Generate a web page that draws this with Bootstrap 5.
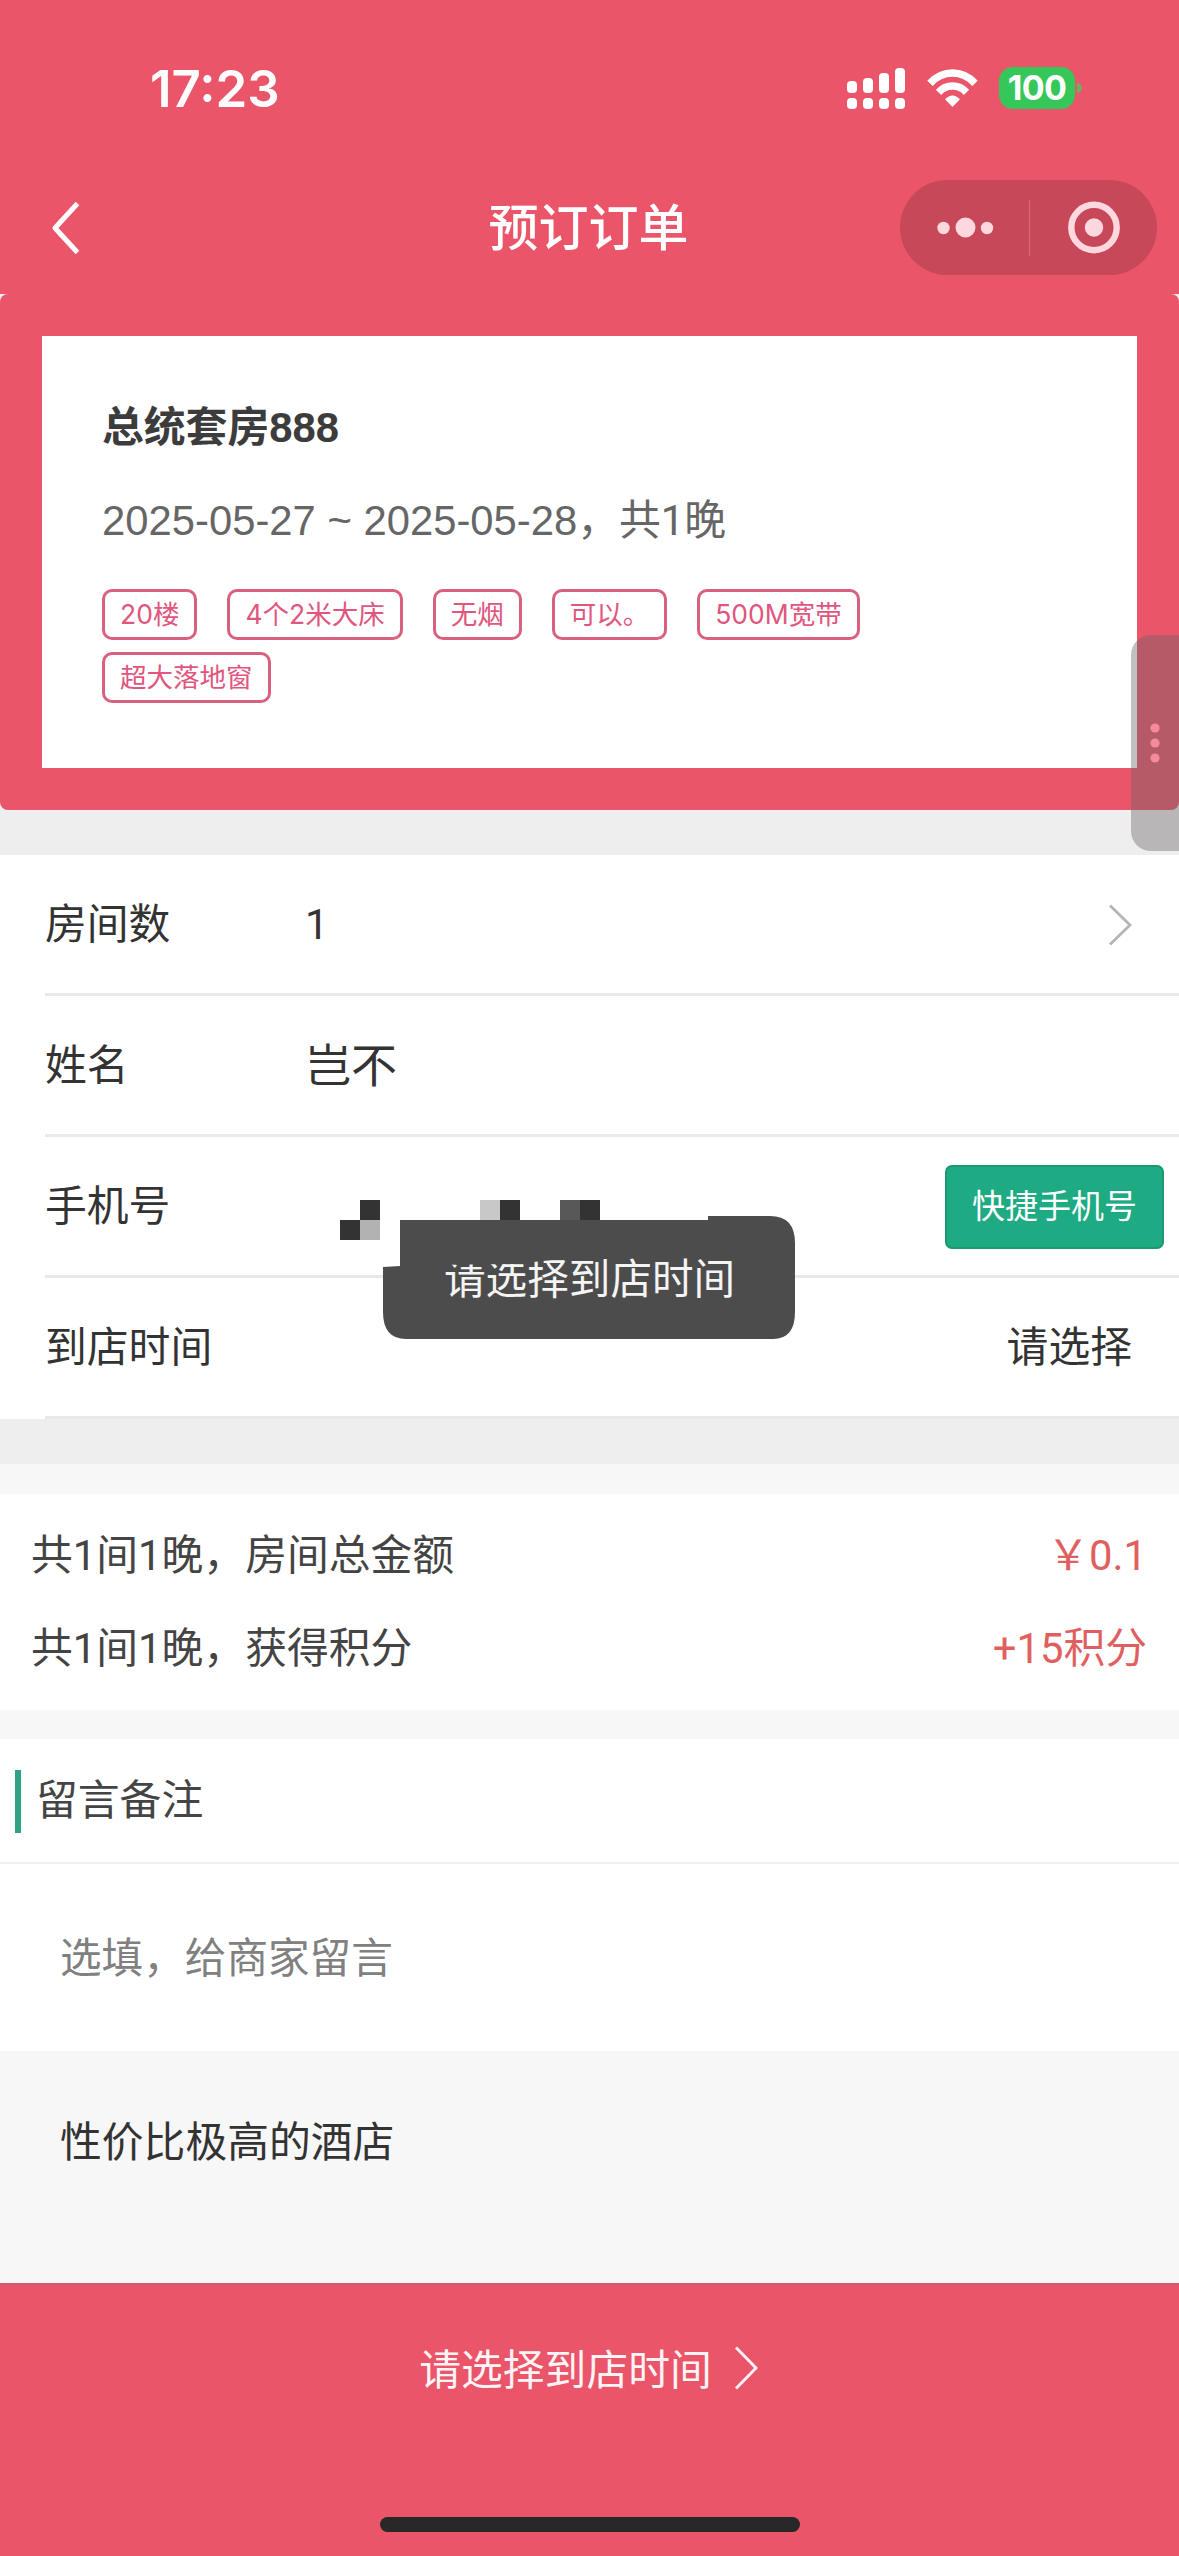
<!DOCTYPE html>
<html lang="zh-CN">
<head>
<meta charset="utf-8">
<meta name="viewport" content="width=device-width, initial-scale=1">
<title>预订订单</title>
<link href="https://cdn.jsdelivr.net/npm/bootstrap@5.3.0/dist/css/bootstrap.min.css" rel="stylesheet">
<style>
  :root { --rose: #ea5569; }
  body { width: 1179px; height: 2556px; overflow: hidden; background: #f7f7f7; color: #333; font: 41.8px/60px "Liberation Sans", "Noto Sans CJK SC", sans-serif; }
  svg { display: block; flex: none; }
  .screen { height: 2556px; }
  .rose { background: var(--rose); }
  .num { font-family: Roboto, "Noto Sans CJK SC", sans-serif; }
  .status { height: 176px; padding: 0 97px 1px 150px; }
  .clock { font: 600 51px/60px Inter, sans-serif; padding-top: 2px; }
  .signal { margin-right: 22px; }
  .wifi { margin-right: 21px; }
  .power { width: 76px; height: 42px; border-radius: 14px; background: #35c759; font: 700 34px/42px Inter, sans-serif; letter-spacing: -.6px; }
  .nub { width: 5px; height: 10px; border-radius: 0 5px 5px 0; background: #6fae60; margin-left: 2px; }
  .titlebar { height: 118px; padding: 0 22px 15px 50px; }
  .page-title { font-size: 50px; font-weight: 500; margin-left: -1px; padding-top: 3px; }
  .capsule { width: 257px; height: 95px; }
  .hero-wrap { background: #eee; height: 561px; }
  .hero { height: 516px; border-radius: 8px; padding: 42px; }
  .room { height: 432px; padding: 62px 60px 0; }
  .room-name { font-weight: 700; color: #3c3c3c; line-height: 60px; }
  .room-date { color: #666; margin-top: 33px; }
  .tags { gap: 12px 30px; margin-top: 38px; width: 860px; }
  .tag-item { height: 51px; border: 3px solid #d9607f; border-radius: 10px; padding: 2px 15px 0; font: 26.5px/40px Inter, "Noto Sans CJK SC", sans-serif; color: #e0567e; }
  .form-line { height: 141px; margin-left: 45px; border-bottom: 3px solid #e9e9e9; padding: 2px 47px 0 0; }
  .form-line > .caption { width: 260px; }
  .quick { width: 219px; height: 84px; border: 2px solid #1b9874; border-radius: 7px; background: #1eaa82; font-size: 33px; line-height: 80px; margin: -1px -32px 0 0; padding: 0; color: #fff; }
  .strip { height: 45px; background: #eee; }
  .totals { height: 216px; padding: 15px 32px 0 31px; margin-top: 30px; color: #444; }
  .totals > div { height: 93px; }
  .money { color: #e0605f; }
  .note-head { height: 125px; margin-top: 29px; padding: 1px 0 0 15px; border-bottom: 2px solid #f0f0f0; color: #444; }
  .marker { width: 6px; height: 63px; background: #2fa284; margin-right: 15px; }
  .note { height: 187px; padding: 3px 0 0 60px; color: #808080; font-size: 41.6px; }
  .about { height: 232px; padding: 62px 60px 0; }
  .foot { height: 273px; border-top: 2px solid #c4626f; color: #fff3f5; }
  .go { height: 171px; gap: 22px; margin-left: -2px; }
  .go svg { margin-top: -5px; }
  .home { width: 420px; height: 15px; border-radius: 8px; background: #282828; margin-top: 61px; }
  .handle { left: 1131px; top: 635px; width: 48px; height: 216px; border-radius: 20px 0 0 20px; background: rgba(106,98,102,.4); padding: 88px 0 0 19px; }
  .toast-shape { left: 340px; top: 1200px; }
  .toast-text { left: 444px; top: 1250px; font-size: 41.6px; color: #f4f4f4; }
  .toast-trim { left: 430px; top: 1250px; }
</style>
</head>
<body>
<div class="screen d-flex flex-column position-relative">
  <div class="rose">
    <div class="status d-flex align-items-center text-white">
      <span class="clock me-auto">17:23</span>
      <svg class="signal" width="58" height="42" viewBox="0 0 58 42" fill="#fff"><rect y="14" width="10" height="12" rx="4"/><rect x="16" y="11" width="10" height="15" rx="4"/><rect x="32" y="6" width="10" height="20" rx="4"/><rect x="48" y="1" width="10" height="25" rx="4"/><rect y="31" width="10" height="11" rx="4"/><rect x="16" y="31" width="10" height="11" rx="4"/><rect x="32" y="31" width="10" height="11" rx="4"/><rect x="48" y="31" width="10" height="11" rx="4"/></svg>
      <svg class="wifi" width="51" height="38" viewBox="0 0 51 38"><g fill="none" stroke="#fff" stroke-width="7.5"><path d="M3 14.3C16 .7 35 .7 48 14.3"/><path d="M11.5 23.3C19.5 15 31.5 15 39.5 23.3"/></g><path d="M25.5 38L18 30.3Q25.5 22.5 33 30.3Z" fill="#fff"/></svg>
      <span class="power text-center">100</span><span class="nub"></span>
    </div>
    <div class="titlebar d-flex align-items-center justify-content-between text-white position-relative">
      <svg width="30" height="54" viewBox="0 0 30 54" fill="none" stroke="#fff" stroke-width="5"><path d="M27.5 2.5L5 27L27.5 51.5" stroke-linejoin="round"/></svg>
      <span class="page-title position-absolute start-50 translate-middle-x">预订订单</span>
      <svg class="capsule" viewBox="0 0 257 95"><rect width="257" height="95" rx="47.5" fill="#c64859"/><path d="M129.500 20V76" stroke="#d56375" stroke-width="1.5"/><g fill="#ffd8df"><circle cx="43.5" cy="48" r="6.2"/><circle cx="65.5" cy="47.5" r="10"/><circle cx="87" cy="48" r="6.2"/><circle cx="194" cy="47.5" r="9.2"/></g><circle cx="194" cy="47.5" r="22.7" fill="none" stroke="#ffd8df" stroke-width="6.4"/></svg>
    </div>
  </div>

  <div class="hero-wrap">
    <div class="hero rose">
      <div class="room bg-white">
        <div class="room-name">总统套房888</div>
        <div class="room-date">2025-05-27 ~ 2025-05-28，共<span class="num">1</span>晚</div>
        <div class="tags d-flex flex-wrap">
          <span class="tag-item">20楼</span><span class="tag-item">4个2米大床</span><span class="tag-item">无烟</span><span class="tag-item">可以。</span><span class="tag-item">500M宽带</span><span class="tag-item">超大落地窗</span>
        </div>
      </div>
    </div>
  </div>

  <div class="bg-white">
    <div class="form-line d-flex align-items-center"><span class="caption">房间数</span><span class="num">1</span>
      <svg class="ms-auto" width="24" height="42" viewBox="0 0 24 42" fill="none" stroke="#b5b5b5" stroke-width="2.8"><path d="M2 1.5L22 21L2 40.5"/></svg></div>
    <div class="form-line d-flex align-items-center"><span class="caption">姓名</span><span style="font-size:46px">岂不</span></div>
    <div class="form-line d-flex align-items-center"><span class="caption">手机号</span><button class="btn quick ms-auto">快捷手机号</button></div>
    <div class="form-line d-flex align-items-center"><span class="caption">到店时间</span><span class="ms-auto me-n1">请选择</span></div>
  </div>
  <div class="strip"></div>

  <div class="totals bg-white num">
    <div class="d-flex align-items-center justify-content-between"><span>共1间1晚，房间总金额</span><span class="money">￥0.1</span></div>
    <div class="d-flex align-items-center justify-content-between"><span>共1间1晚，获得积分</span><span class="money">+15积分</span></div>
  </div>

  <div class="note-head bg-white d-flex align-items-center"><span class="marker"></span><span>留言备注</span></div>
  <div class="note bg-white d-flex align-items-center">选填，给商家留言</div>
  <div class="about">性价比极高的酒店</div>

  <div class="foot rose d-flex flex-column align-items-center">
    <div class="go d-flex align-items-center"><span>请选择到店时间</span>
      <svg width="24" height="44" viewBox="0 0 24 44" fill="none" stroke="#fff3f5" stroke-width="3"><path d="M2 1.5L22 22L2 42.5"/></svg></div>
    <div class="home"></div>
  </div>

  <div class="handle position-absolute"><svg width="10" height="41" viewBox="0 0 10 41" fill="#f58b9a"><circle cx="5" cy="5" r="4.6"/><circle cx="5" cy="20" r="4.6"/><circle cx="5" cy="35" r="4.6"/></svg></div>

  <svg class="toast-shape position-absolute" width="460" height="142" viewBox="0 0 460 142">
    <g fill="#333"><path d="M20 0h20v20H20zM0 20h20v20H0zM160 0h20v20H160zM240 0h20v20H240z"/></g>
    <path d="M20 20h20v20H20z" fill="#b2b2b2"/><path d="M140 0h20v20H140z" fill="#c8c8c8"/><path d="M220 0h20v20H220z" fill="#585858"/>
    <path d="M60 20H368V16H430Q455 16 455 43V112Q455 139 433 139H66Q43 139 43 112V67L60 66Z" fill="#4c4c4c"/>
  </svg>
  <div class="toast-text position-absolute text-nowrap">请选择到店时间</div>
  <svg class="toast-trim position-absolute" width="130" height="16" viewBox="0 0 130 16"><path d="M0 0H122V10L84 14L0 15Z" fill="#4c4c4c"/></svg>
</div>
<script src="https://cdn.jsdelivr.net/npm/bootstrap@5.3.0/dist/js/bootstrap.bundle.min.js"></script>
</body>
</html>
